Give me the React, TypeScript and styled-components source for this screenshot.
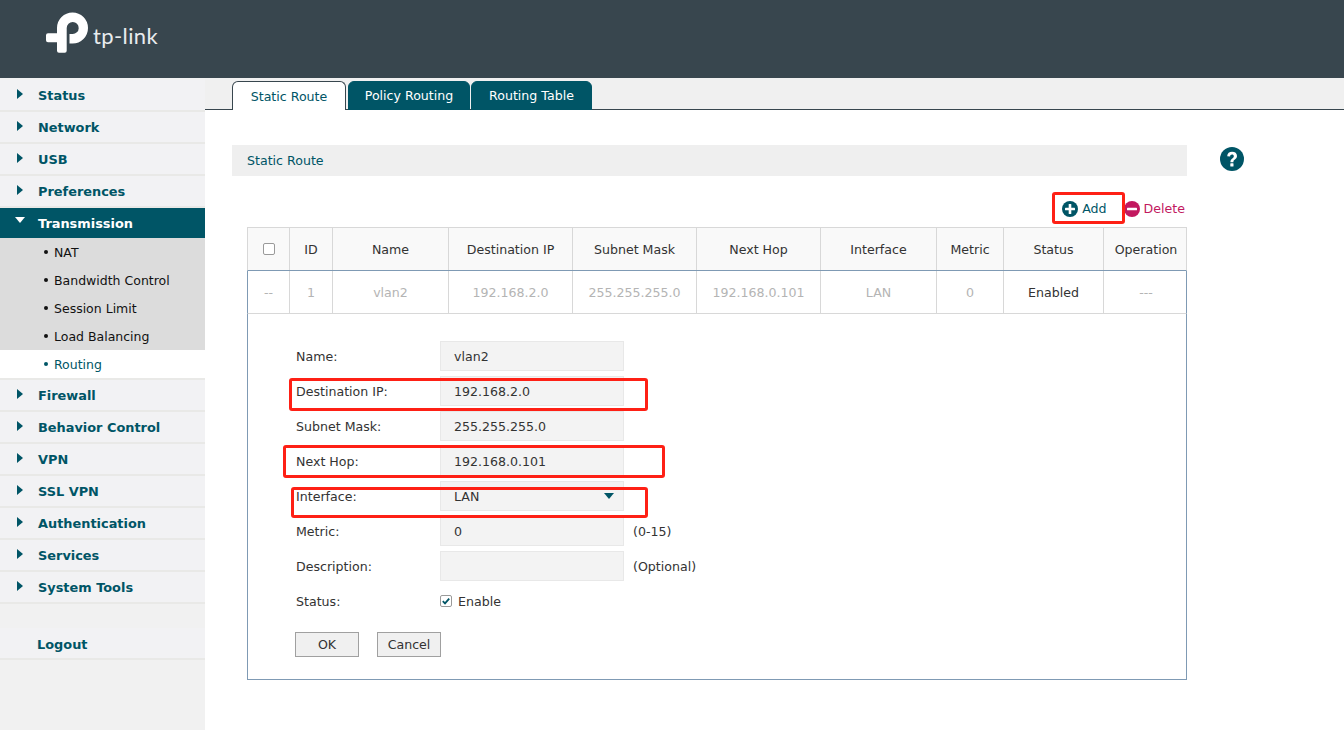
import React from "react";
import styled, { createGlobalStyle } from "styled-components";

const FONT = `"DejaVu Sans", Verdana, sans-serif`;
const TEAL = "#005566";
const BLUE_LINE = "#7f9ab4";
const GREY_LINE = "#d8d8d8";
const TEXT_SIZE = "12.6px";

const Global = createGlobalStyle`
  html, body { margin: 0; padding: 0; background: #fff; }
  body { font-family: ${FONT}; font-size: ${TEXT_SIZE}; color: #333; overflow: hidden; }
  * { box-sizing: border-box; }
`;

const Page = styled.div`
  position: relative;
  width: 1344px;
  height: 730px;
  overflow: hidden;
`;

const Header = styled.header`
  height: 78px;
  background: #38464e;
  display: flex;
  align-items: flex-start;
  padding: 12px 0 0 46px;
  gap: 4px;
`;

const LogoText = styled.span`
  font-family: Lato, "Open Sans", sans-serif;
  font-size: 22px;
  line-height: 47px;
  color: #e9ecee;
  letter-spacing: 0.4px;
`;

const Body = styled.div`
  display: flex;
  height: 652px;
`;

const Sidebar = styled.nav`
  width: 205px;
  flex: none;
  background: #f1f1f1;
  padding-top: 2px;
`;

const MenuRow = styled.div<{ $open?: boolean }>`
  height: ${(p) => (p.$open ? "30px" : "32px")};
  display: flex;
  align-items: center;
  padding-left: 17px;
  background: ${(p) => (p.$open ? TEAL : "#f2f2f4")};
  border-bottom: ${(p) => (p.$open ? "none" : "2px solid #e9e9e7")};
  color: ${(p) => (p.$open ? "#fff" : TEAL)};
  font-weight: 700;
  font-size: 12.9px;
`;

const ArrowRight = styled.span`
  width: 0;
  height: 0;
  margin: -2px 15px 0 0;
  border-style: solid;
  border-width: 5.5px 0 5.5px 6px;
  border-color: transparent transparent transparent ${TEAL};
`;

const ArrowDown = styled.span`
  width: 0;
  height: 0;
  margin: -6px 13px 0 -2px;
  border-style: solid;
  border-width: 6px 5px 0 5px;
  border-color: #fff transparent transparent transparent;
`;

const LogoutRow = styled(MenuRow)`
  margin-top: 24px;
  padding-left: 37px;
  padding-top: 2px;
`;

const SubMenu = styled.div`
  background: #dcdcdc;
`;

const SubItem = styled.div<{ $active?: boolean }>`
  height: ${(p) => (p.$active ? "30px" : "28px")};
  display: flex;
  align-items: center;
  gap: 6px;
  padding-left: 44px;
  background: ${(p) => (p.$active ? "#fff" : "transparent")};
  border-bottom: ${(p) => (p.$active ? "2px solid #e9e9e7" : "none")};
  color: ${(p) => (p.$active ? TEAL : "#111")};
  font-size: 12.5px;
`;

const Bullet = styled.span`
  width: 4px;
  height: 4px;
  border-radius: 50%;
  background: currentColor;
`;

const Main = styled.main`
  flex: 1;
  min-width: 0;
`;

const TabBar = styled.div`
  height: 32px;
  background: #f0f0f0;
  border-bottom: 1px solid #38464e;
  display: flex;
  align-items: flex-end;
  padding-left: 27px;
`;

const Tab = styled.div<{ $active?: boolean; $w: number; $gap: number }>`
  width: ${(p) => p.$w}px;
  margin-right: ${(p) => p.$gap}px;
  height: 29px;
  margin-bottom: -1px;
  display: flex;
  align-items: center;
  justify-content: center;
  border-radius: 6px 6px 0 0;
  font-size: ${TEXT_SIZE};
  background: ${(p) => (p.$active ? "#fff" : TEAL)};
  color: ${(p) => (p.$active ? TEAL : "#fff")};
  border: 1px solid ${(p) => (p.$active ? "#38464e" : TEAL)};
  border-bottom: ${(p) => (p.$active ? "none" : `1px solid ${TEAL}`)};
`;

const Content = styled.div`
  padding: 35px 0 0 27px;
`;

const TitleRow = styled.div`
  display: flex;
  align-items: center;
  gap: 33px;
`;

const SectionBar = styled.div`
  width: 955px;
  height: 31px;
  background: #efefef;
  color: ${TEAL};
  display: flex;
  align-items: center;
  padding-left: 15px;
  font-size: ${TEXT_SIZE};
`;

const HelpIcon = styled.svg`
  width: 24px;
  height: 24px;
  display: block;
  margin-top: -3px;
`;

const Toolbar = styled.div`
  width: 955px;
  height: 51px;
  display: flex;
  justify-content: flex-end;
  align-items: flex-start;
  padding: 24px 2px 0 0;
`;

const ToolButton = styled.div<{ $color: string; $mr?: number }>`
  display: flex;
  align-items: center;
  gap: 4px;
  height: 17px;
  color: ${(p) => p.$color};
  font-size: ${TEXT_SIZE};
  margin-right: ${(p) => p.$mr ?? 0}px;
`;

const Panel = styled.div`
  margin-left: 15px;
  width: 940px;
`;

const GridRow = styled.div<{ $head?: boolean }>`
  display: grid;
  grid-template-columns: 42px 43px 116px 124px 124px 124px 116px 67px 100px 84px;
  height: ${(p) => (p.$head ? "44px" : "43px")};
  background: ${(p) => (p.$head ? "#f9f9f9" : "#fff")};
  border-top: ${(p) => (p.$head ? `1px solid ${GREY_LINE}` : "none")};
  border-bottom: 1px solid ${(p) => (p.$head ? BLUE_LINE : GREY_LINE)};
  border-left: 1px solid ${(p) => (p.$head ? GREY_LINE : BLUE_LINE)};
  border-right: 1px solid ${(p) => (p.$head ? GREY_LINE : BLUE_LINE)};
`;

const Cell = styled.div<{ $muted?: boolean }>`
  display: flex;
  align-items: center;
  justify-content: center;
  font-size: ${TEXT_SIZE};
  color: ${(p) => (p.$muted ? "#b4b4b4" : "#333")};
  border-right: 1px solid ${GREY_LINE};
  &:last-child { border-right: none; }
`;

const CheckBox = styled.span`
  width: 12px;
  height: 12px;
  flex: none;
  border: 1px solid #9a9a9a;
  border-radius: 2px;
  background: #fff;
  display: flex;
  align-items: center;
  justify-content: center;
`;

const FormPanel = styled.div`
  height: 366px;
  border: 1px solid ${BLUE_LINE};
  border-top: none;
  padding: 27px 0 0 48px;
`;

const FormRow = styled.div`
  display: flex;
  align-items: center;
  height: 30px;
  margin-bottom: 5px;
`;

const Label = styled.div`
  width: 144px;
  flex: none;
  font-size: ${TEXT_SIZE};
  color: #333;
`;

const Field = styled.div`
  position: relative;
  width: 184px;
  height: 30px;
  background: #f3f3f3;
  border: 1px solid #e8e8e8;
  padding-left: 13px;
  display: flex;
  align-items: center;
  font-size: ${TEXT_SIZE};
  color: #333;
`;

const SelectArrow = styled.span`
  position: absolute;
  right: 9px;
  top: 11px;
  width: 0;
  height: 0;
  border-style: solid;
  border-width: 6px 5px 0 5px;
  border-color: ${TEAL} transparent transparent transparent;
`;

const Hint = styled.span`
  margin-left: 9px;
  font-size: ${TEXT_SIZE};
  color: #333;
`;

const CheckLabel = styled.label`
  display: flex;
  align-items: center;
  gap: 6px;
  font-size: ${TEXT_SIZE};
  color: #333;
`;

const Actions = styled.div`
  display: flex;
  gap: 18px;
  margin-top: 16px;
  margin-left: -1px;
`;

const Button = styled.button`
  width: 64px;
  height: 25px;
  padding: 0;
  background: #f0f0f0;
  border: 1px solid #a0a0a0;
  border-radius: 0;
  font-family: ${FONT};
  font-size: ${TEXT_SIZE};
  color: #333;
`;

const Callout = styled.div<{ $x: number; $y: number; $w: number; $h: number }>`
  position: absolute;
  left: ${(p) => p.$x}px;
  top: ${(p) => p.$y}px;
  width: ${(p) => p.$w}px;
  height: ${(p) => p.$h}px;
  border: 3px solid #fe2015;
  border-radius: 3px;
  pointer-events: none;
`;

const menuTop = ["Status", "Network", "USB", "Preferences"];
const menuBottom = ["Firewall", "Behavior Control", "VPN", "SSL VPN", "Authentication", "Services", "System Tools"];
const subItems = ["NAT", "Bandwidth Control", "Session Limit", "Load Balancing"];
const heads = ["ID", "Name", "Destination IP", "Subnet Mask", "Next Hop", "Interface", "Metric", "Status", "Operation"];
const cells = ["--", "1", "vlan2", "192.168.2.0", "255.255.255.0", "192.168.0.101", "LAN", "0"];
const fields: [string, string][] = [
  ["Name:", "vlan2"],
  ["Destination IP:", "192.168.2.0"],
  ["Subnet Mask:", "255.255.255.0"],
  ["Next Hop:", "192.168.0.101"],
];
const callouts = [
  { x: 1052, y: 192, w: 73, h: 32 },
  { x: 289, y: 378, w: 359, h: 33 },
  { x: 283, y: 445, w: 382, h: 33 },
  { x: 291, y: 487, w: 357, h: 31 },
];

const LogoMark = () => (
  <svg width="43" height="41" viewBox="46 12 43 41" aria-hidden="true">
    <path
      fill="#fff"
      d="M57 28A15.5 15.5 0 1 1 72.5 43.5H69.5V34H72.5A6 6 0 1 0 66.7 28V50.7Q66.7 52.7 64.7 52.7H59Q57 52.7 57 50.7V42.3H48Q46 42.3 46 40.3V35.3Q46 33.3 48 33.3H57Z"
    />
  </svg>
);

const CircleIcon = ({ color, plus }: { color: string; plus?: boolean }) => (
  <svg width="16" height="16" viewBox="0 0 16 16" aria-hidden="true">
    <circle cx="8" cy="8" r="8" fill={color} />
    <rect x="3" y="6.7" width="10" height="2.6" rx="0.6" fill="#fff" />
    {plus && <rect x="6.7" y="3" width="2.6" height="10" rx="0.6" fill="#fff" />}
  </svg>
);

const Check = () => (
  <svg width="10" height="10" viewBox="0 0 10 10" aria-hidden="true">
    <path d="M1.8 5.2L4 7.4L8.2 2.6" fill="none" stroke={TEAL} strokeWidth="1.8" />
  </svg>
);

export default function App() {
  return (
    <Page>
      <Global />
      <Header>
        <LogoMark />
        <LogoText>tp-link</LogoText>
      </Header>
      <Body>
        <Sidebar>
          {menuTop.map((m) => (
            <MenuRow key={m}>
              <ArrowRight />
              {m}
            </MenuRow>
          ))}
          <MenuRow $open>
            <ArrowDown />
            Transmission
          </MenuRow>
          <SubMenu>
            {subItems.map((s) => (
              <SubItem key={s}>
                <Bullet />
                {s}
              </SubItem>
            ))}
            <SubItem $active>
              <Bullet />
              Routing
            </SubItem>
          </SubMenu>
          {menuBottom.map((m) => (
            <MenuRow key={m}>
              <ArrowRight />
              {m}
            </MenuRow>
          ))}
          <LogoutRow>Logout</LogoutRow>
        </Sidebar>
        <Main>
          <TabBar>
            <Tab $active $w={114} $gap={2}>Static Route</Tab>
            <Tab $w={122} $gap={1}>Policy Routing</Tab>
            <Tab $w={121} $gap={0}>Routing Table</Tab>
          </TabBar>
          <Content>
            <TitleRow>
              <SectionBar>Static Route</SectionBar>
              <HelpIcon viewBox="0 0 24 24" aria-hidden="true">
                <circle cx="12" cy="12" r="12" fill={TEAL} />
                <path d="M7.2 9.2C7.3 6.3 9.4 4.8 12.1 4.8C15 4.8 17 6.4 17 8.9C17 10.9 15.8 11.8 14.6 12.7C13.6 13.4 13.4 13.9 13.4 15.2H10.4C10.4 13.2 11 12.3 12.3 11.4C13.2 10.7 13.8 10.2 13.8 9.2C13.8 8.2 13.1 7.5 12 7.5C10.9 7.5 10.2 8.2 10.1 9.4Z" fill="#fff" />
                <rect x="10.3" y="16.2" width="3.2" height="3.2" rx="0.5" fill="#fff" />
              </HelpIcon>
            </TitleRow>
            <Toolbar>
              <ToolButton $color={TEAL} $mr={17}>
                <CircleIcon color={TEAL} plus />
                Add
              </ToolButton>
              <ToolButton $color="#c2185f">
                <CircleIcon color="#c2185f" />
                Delete
              </ToolButton>
            </Toolbar>
            <Panel>
              <GridRow $head>
                <Cell><CheckBox /></Cell>
                {heads.map((h) => (
                  <Cell key={h}>{h}</Cell>
                ))}
              </GridRow>
              <GridRow>
                {cells.map((c, i) => (
                  <Cell key={i} $muted>{c}</Cell>
                ))}
                <Cell>Enabled</Cell>
                <Cell $muted>---</Cell>
              </GridRow>
              <FormPanel>
                {fields.map(([l, v]) => (
                  <FormRow key={l}>
                    <Label>{l}</Label>
                    <Field>{v}</Field>
                  </FormRow>
                ))}
                <FormRow>
                  <Label>Interface:</Label>
                  <Field>
                    LAN
                    <SelectArrow />
                  </Field>
                </FormRow>
                <FormRow>
                  <Label>Metric:</Label>
                  <Field>0</Field>
                  <Hint>(0-15)</Hint>
                </FormRow>
                <FormRow>
                  <Label>Description:</Label>
                  <Field />
                  <Hint>(Optional)</Hint>
                </FormRow>
                <FormRow>
                  <Label>Status:</Label>
                  <CheckLabel>
                    <CheckBox><Check /></CheckBox>
                    Enable
                  </CheckLabel>
                </FormRow>
                <Actions>
                  <Button>OK</Button>
                  <Button>Cancel</Button>
                </Actions>
              </FormPanel>
            </Panel>
          </Content>
        </Main>
      </Body>
      {callouts.map((c) => (
        <Callout key={c.x} $x={c.x} $y={c.y} $w={c.w} $h={c.h} />
      ))}
    </Page>
  );
}
